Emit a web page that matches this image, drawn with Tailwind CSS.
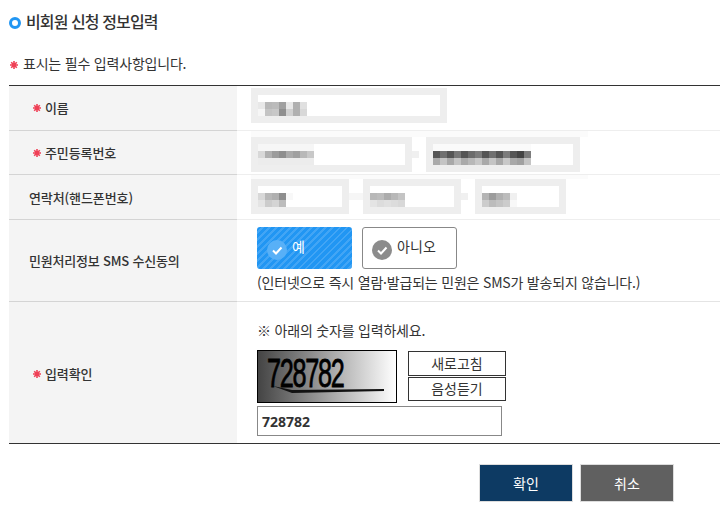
<!DOCTYPE html>
<html lang="ko">

<head>
    <meta charset="UTF-8">
    <title>비회원 신청 정보입력</title>
    <script src="https://cdn.jsdelivr.net/npm/@tailwindcss/browser@4"></script>
</head>

<body class="bg-white w-[720px] h-[530px] overflow-hidden pl-[9px] font-['Noto_Sans_CJK_KR','Noto_Sans',sans-serif] text-[#333]">

    <!-- Title -->
    <div class="h-[44px] flex items-center gap-[5px] pt-[1px]">
        <span class="w-[12px] h-[12px] rounded-full border-[3px] border-[#2196f3]"></span>
        <h1 class="-mt-[3px] text-[16px] font-medium tracking-[-0.9px] text-[#333]">비회원 신청 정보입력</h1>
    </div>
    <p class="h-[41px] flex items-center gap-[5px] pl-[1px] pt-[1px] text-[14px] tracking-[-0.2px] text-[#333]">
        <svg width="8" height="8" viewBox="0 0 8 8" stroke="#ef4056" stroke-width="1.6"><path d="M4 0v8M0 4h8M1.2 1.2l5.6 5.6M6.8 1.2L1.2 6.8" /></svg>
        <span class="-mt-[3px]">표시는 필수 입력사항입니다.</span>
    </p>

    <!-- Form table -->
    <div class="border-t border-[#333] border-b border-b-[#333]">

        <!-- Name -->
        <div class="flex h-[45px]">
            <div class="w-[228px] bg-[#f4f4f4] border-b border-[#d4d4d4] flex items-center pl-[24px] gap-[4px] text-[13px] font-medium tracking-[-0.1px]">
                <svg width="8" height="8" viewBox="0 0 8 8" stroke="#ef4056" stroke-width="1.6"><path d="M4 0v8M0 4h8M1.2 1.2l5.6 5.6M6.8 1.2L1.2 6.8" /></svg>이름
            </div>
            <div class="flex-1 border-b border-[#eeeeee] pl-[14px] pt-[2px]">
                <div class="w-[196px] h-[35px] border-[7px] border-[#eeeeee]">
                    <svg width="49" height="14" class="mt-[7px]">
                        <rect x="0" width="7" height="7" fill="#e8e8e8" /><rect x="7" width="7" height="7" fill="#b8b8b8" /><rect x="14" width="7" height="7" fill="#bbbbbb" /><rect x="21" width="7" height="7" fill="#a0a0a0" /><rect x="28" width="7" height="7" fill="#e8e8e8" /><rect x="35" width="7" height="7" fill="#b0b0b0" /><rect x="42" width="7" height="7" fill="#e0e0e0" />
                        <rect x="0" y="7" width="7" height="7" fill="#f6f6f6" /><rect x="7" y="7" width="7" height="7" fill="#c4c4c4" /><rect x="14" y="7" width="7" height="7" fill="#c8c8c8" /><rect x="21" y="7" width="7" height="7" fill="#8f8f8f" /><rect x="28" y="7" width="7" height="7" fill="#d0d0d0" /><rect x="35" y="7" width="7" height="7" fill="#b0b0b0" /><rect x="42" y="7" width="7" height="7" fill="#d8d8d8" />
                    </svg>
                </div>
            </div>
        </div>

        <!-- Resident number -->
        <div class="flex h-[44px]">
            <div class="w-[228px] bg-[#f4f4f4] border-b border-[#d4d4d4] flex items-center pl-[24px] gap-[4px] text-[13px] font-medium tracking-[-0.1px]">
                <svg width="8" height="8" viewBox="0 0 8 8" stroke="#ef4056" stroke-width="1.6"><path d="M4 0v8M0 4h8M1.2 1.2l5.6 5.6M6.8 1.2L1.2 6.8" /></svg>주민등록번호
            </div>
            <div class="flex-1 border-b border-[#eeeeee] pl-[14px]">
                <div class="h-[6px] w-[337px] bg-[#fbfbfb]"></div>
                <div class="flex items-center">
                    <div class="w-[161px] h-[35px] border-[7px] border-[#eeeeee]">
                        <svg width="56" height="21">
                            <rect width="56" height="7" fill="#f6f6f6" />
                            <rect x="0" y="7" width="7" height="7" fill="#d8d8d8" /><rect x="7" y="7" width="7" height="7" fill="#b0b0b0" /><rect x="14" y="7" width="7" height="7" fill="#9c9c9c" /><rect x="21" y="7" width="7" height="7" fill="#8e8e8e" /><rect x="28" y="7" width="7" height="7" fill="#aaaaaa" /><rect x="35" y="7" width="7" height="7" fill="#a0a0a0" /><rect x="42" y="7" width="7" height="7" fill="#b8b8b8" /><rect x="49" y="7" width="7" height="7" fill="#c8c8c8" />
                            <rect y="14" width="56" height="7" fill="#ececec" />
                        </svg>
                    </div>
                    <span class="w-[7px] h-[7px] bg-[#f0f0f0]"></span>
                    <span class="w-[7px]"></span>
                    <div class="w-[154px] h-[35px] border-[7px] border-[#eeeeee]">
                        <svg width="98" height="21">
                            <rect width="98" height="7" fill="#fafafa" />
                            <rect x="0" y="7" width="7" height="7" fill="#555555" /><rect x="7" y="7" width="7" height="7" fill="#707070" /><rect x="14" y="7" width="7" height="7" fill="#555555" /><rect x="21" y="7" width="7" height="7" fill="#777777" /><rect x="28" y="7" width="7" height="7" fill="#555555" /><rect x="35" y="7" width="7" height="7" fill="#6c6c6c" /><rect x="42" y="7" width="7" height="7" fill="#7c7c7c" /><rect x="49" y="7" width="7" height="7" fill="#555555" /><rect x="56" y="7" width="7" height="7" fill="#707070" /><rect x="63" y="7" width="7" height="7" fill="#555555" /><rect x="70" y="7" width="7" height="7" fill="#7c7c7c" /><rect x="77" y="7" width="7" height="7" fill="#555555" /><rect x="84" y="7" width="7" height="7" fill="#444444" /><rect x="91" y="7" width="7" height="7" fill="#7c7c7c" />
                            <rect x="0" y="14" width="7" height="7" fill="#aaaaaa" /><rect x="7" y="14" width="7" height="7" fill="#c4c4c4" /><rect x="14" y="14" width="7" height="7" fill="#a8a8a8" /><rect x="21" y="14" width="7" height="7" fill="#c4c4c4" /><rect x="28" y="14" width="7" height="7" fill="#aaaaaa" /><rect x="35" y="14" width="7" height="7" fill="#b8b8b8" /><rect x="42" y="14" width="7" height="7" fill="#c8c8c8" /><rect x="49" y="14" width="7" height="7" fill="#aaaaaa" /><rect x="56" y="14" width="7" height="7" fill="#c4c4c4" /><rect x="63" y="14" width="7" height="7" fill="#a8a8a8" /><rect x="70" y="14" width="7" height="7" fill="#c8c8c8" /><rect x="77" y="14" width="7" height="7" fill="#a8a8a8" /><rect x="84" y="14" width="7" height="7" fill="#a0a0a0" /><rect x="91" y="14" width="7" height="7" fill="#c4c4c4" />
                        </svg>
                    </div>
                </div>
            </div>
        </div>

        <!-- Phone -->
        <div class="flex h-[45px]">
            <div class="w-[228px] bg-[#f4f4f4] border-b border-[#d4d4d4] flex items-center pl-[20px] pt-[2px] text-[13px] font-medium tracking-[-0.1px]">
                연락처(핸드폰번호)
            </div>
            <div class="flex-1 border-b border-[#eeeeee] pl-[14px]">
                <div class="h-[4px] w-[337px] bg-[#fbfbfb]"></div>
                <div class="flex items-center">
                    <div class="w-[98px] h-[35px] border-[7px] border-[#eeeeee] pt-[7px]">
                        <svg width="35" height="14" class="block">
                            <rect x="0" width="7" height="7" fill="#d8d8d8" /><rect x="7" width="7" height="7" fill="#b8b8b8" /><rect x="14" width="7" height="7" fill="#b0b0b0" /><rect x="21" width="7" height="7" fill="#8e8e8e" /><rect x="28" width="7" height="7" fill="#f8f8f8" />
                            <rect x="0" y="7" width="7" height="7" fill="#e4e4e4" /><rect x="7" y="7" width="7" height="7" fill="#cccccc" /><rect x="14" y="7" width="7" height="7" fill="#d4d4d4" /><rect x="21" y="7" width="7" height="7" fill="#bcbcbc" />
                        </svg>
                    </div>
                    <span class="w-[14px] h-[7px] bg-[#f6f6f6]"></span>
                    <div class="w-[98px] h-[35px] border-[7px] border-[#eeeeee] pt-[7px]">
                        <svg width="35" height="14" class="block">
                            <rect x="0" width="7" height="7" fill="#b8b8b8" /><rect x="7" width="7" height="7" fill="#bcbcbc" /><rect x="14" width="7" height="7" fill="#acacac" /><rect x="21" width="7" height="7" fill="#b8b8b8" /><rect x="28" width="7" height="7" fill="#c4c4c4" />
                            <rect x="0" y="7" width="7" height="7" fill="#e4e4e4" /><rect x="7" y="7" width="7" height="7" fill="#dcdcdc" /><rect x="14" y="7" width="7" height="7" fill="#e0e0e0" /><rect x="21" y="7" width="7" height="7" fill="#dcdcdc" /><rect x="28" y="7" width="7" height="7" fill="#d8d8d8" />
                        </svg>
                    </div>
                    <span class="w-[7px] h-[7px] bg-[#f0f0f0]"></span>
                    <span class="w-[7px]"></span>
                    <div class="w-[91px] h-[35px] border-[7px] border-[#eeeeee] pt-[7px]">
                        <svg width="35" height="14" class="block">
                            <rect x="0" width="7" height="7" fill="#b4b4b4" /><rect x="7" width="7" height="7" fill="#9c9c9c" /><rect x="14" width="7" height="7" fill="#b0b0b0" /><rect x="21" width="7" height="7" fill="#bcbcbc" /><rect x="28" width="7" height="7" fill="#f0f0f0" />
                            <rect x="0" y="7" width="7" height="7" fill="#cccccc" /><rect x="7" y="7" width="7" height="7" fill="#bcbcbc" /><rect x="14" y="7" width="7" height="7" fill="#c4c4c4" /><rect x="21" y="7" width="7" height="7" fill="#cccccc" /><rect x="28" y="7" width="7" height="7" fill="#f8f8f8" />
                        </svg>
                    </div>
                </div>
            </div>
        </div>

        <!-- SMS agreement -->
        <div class="flex h-[82px]">
            <div class="w-[228px] bg-[#f4f4f4] border-b border-[#d4d4d4] flex items-center pl-[20px] text-[13px] font-medium tracking-[-0.2px]">
                민원처리정보 SMS 수신동의
            </div>
            <div class="flex-1 border-b border-[#e4e4e4] pl-[20px] pt-[7px]">
                <div class="flex gap-[10px]">
                    <div class="w-[95px] h-[42px] rounded-[3px] bg-[#2196f3] bg-[repeating-linear-gradient(135deg,#2196f3_0,#2196f3_3px,#42a5f5_3px,#42a5f5_5px)] flex items-center pl-[10px] gap-[5px] text-[14px] text-white">
                        <svg width="20" height="20" viewBox="0 0 20 20" class="mt-[3px]"><circle cx="10" cy="10" r="10" fill="#58b0f7" /><path d="M6 10.5l3 3 5.5-6" fill="none" stroke="#fff" stroke-width="2" /></svg>
                        <span class="-mt-[3px]">예</span>
                    </div>
                    <div class="w-[95px] h-[42px] rounded-[3px] border border-[#888] bg-white flex items-center pl-[9px] gap-[5px] text-[14px] tracking-[0.1px] text-[#333]">
                        <svg width="20" height="20" viewBox="0 0 20 20" class="mt-[3px]"><circle cx="10" cy="10" r="10" fill="#8c8c8c" /><path d="M6 10.5l3 3 5.5-6" fill="none" stroke="#fff" stroke-width="2" /></svg>
                        <span class="-mt-[3px]">아니오</span>
                    </div>
                </div>
                <p class="mt-[3px] text-[14px] tracking-[-0.2px] leading-[20px] text-[#333] whitespace-nowrap">(인터넷으로 즉시 열람·발급되는 민원은 SMS가 발송되지 않습니다.)</p>
            </div>
        </div>

        <!-- Captcha -->
        <div class="flex h-[141px]">
            <div class="w-[228px] bg-[#f4f4f4] flex items-center pl-[24px] pt-[2px] gap-[4px] text-[13px] font-medium tracking-[-0.1px]">
                <svg width="8" height="8" viewBox="0 0 8 8" stroke="#ef4056" stroke-width="1.6"><path d="M4 0v8M0 4h8M1.2 1.2l5.6 5.6M6.8 1.2L1.2 6.8" /></svg>입력확인
            </div>
            <div class="flex-1 pl-[20px] pt-[18px]">
                <p class="text-[14px] leading-[20px] tracking-[-0.2px] text-[#333]">※ 아래의 숫자를 입력하세요.</p>
                <div class="flex mt-[10px] gap-[11px]">
                    <div class="relative w-[140px] h-[53px] border border-black bg-[linear-gradient(90deg,#444444,#ffffff)] overflow-hidden">
                        <span class="absolute left-[9px] top-[0px] text-[40px] leading-[44px] font-['Liberation_Sans'] tracking-[-2px] text-black [-webkit-text-stroke:0.8px_black] scale-x-[0.63] origin-left">728782</span>
                        <svg width="138" height="51" class="absolute left-0 top-0"><path d="M15 35L34 39L126 38L126 40L34 42Z" fill="#111" /></svg>
                    </div>
                    <div class="flex flex-col gap-[1px] pt-[1px]">
                        <button class="w-[98px] h-[25px] border border-[#333] bg-white text-[14px] text-[#333]">새로고침</button>
                        <button class="w-[98px] h-[24px] border border-[#333] bg-white text-[14px] leading-[20px] pb-[2px] text-[#333]">음성듣기</button>
                    </div>
                </div>
                <div class="mt-[3px] w-[245px] h-[30px] border border-[#888] flex items-center pl-[4px] pt-[1px] text-[14px] font-bold font-['Noto_Sans'] text-[#333]">728782</div>
            </div>
        </div>
    </div>

    <!-- Actions -->
    <div class="flex gap-[7px] mt-[20px] pl-[470px]">
        <button class="w-[94px] h-[38px] border border-[#dddddd] bg-[#0d3a63] text-[14px] text-white">확인</button>
        <button class="w-[94px] h-[38px] border border-[#dddddd] bg-[#606060] text-[14px] text-white">취소</button>
    </div>

</body>

</html>
